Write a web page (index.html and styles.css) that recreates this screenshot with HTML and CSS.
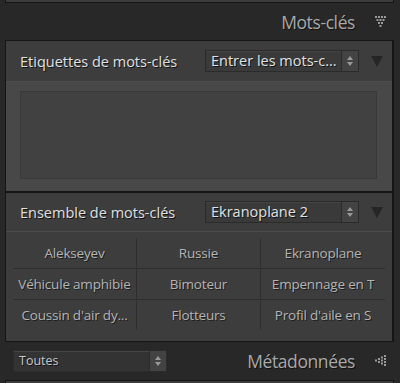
FILE: index.html
```html
<!DOCTYPE html>
<html lang="fr">
<head>
    <meta charset="UTF-8">
    <title>Mots-clés</title>
    <link rel="stylesheet" href="styles.css">
</head>
<body>
    <div class="prev-panel"></div>
    <div class="panel-title">
        <span class="title-text">Mots-clés</span>
        <svg class="dots" width="12" height="14" viewBox="0 0 12 14">
            <g fill="#9a9a9a">
                <rect x="0" y="1" width="2" height="2"/><rect x="3" y="1" width="2" height="2"/><rect x="6" y="1" width="2" height="2"/><rect x="9" y="1" width="2" height="2"/>
                <rect x="1.5" y="4" width="2" height="2"/><rect x="4.5" y="4" width="2" height="2"/><rect x="7.5" y="4" width="2" height="2"/>
                <rect x="3" y="7" width="2" height="2"/><rect x="6" y="7" width="2" height="2"/>
                <rect x="4.5" y="10" width="2" height="2"/>
            </g>
        </svg>
    </div>

    <div class="panel">
        <div class="section-head">
            <span class="label">Etiquettes de mots-clés</span>
            <div class="select">
                <span class="select-value">Entrer les mots-c...</span>
                <span class="spin"><i class="up"></i><i class="down"></i></span>
            </div>
            <span class="tri"></span>
        </div>
        <div class="tags-area">
            <div class="tags-box"></div>
        </div>

        <div class="section-head second">
            <span class="label">Ensemble de mots-clés</span>
            <div class="select">
                <span class="select-value">Ekranoplane 2</span>
                <span class="spin"><i class="up"></i><i class="down"></i></span>
            </div>
            <span class="tri"></span>
        </div>
        <div class="set-area">
            <div class="set-grid">
                <div class="kw">Alekseyev</div>
                <div class="kw">Russie</div>
                <div class="kw">Ekranoplane</div>
                <div class="kw">Véhicule amphibie</div>
                <div class="kw">Bimoteur</div>
                <div class="kw">Empennage en T</div>
                <div class="kw">Coussin d'air dy...</div>
                <div class="kw">Flotteurs</div>
                <div class="kw">Profil d'aile en S</div>
            </div>
        </div>
    </div>

    <div class="panel-title footer">
        <div class="select wide">
            <span class="select-value">Toutes</span>
            <span class="spin"><i class="up"></i><i class="down"></i></span>
        </div>
        <span class="title-text">Métadonnées</span>
        <svg class="dots" width="12" height="12" viewBox="0 0 12 12">
            <g fill="#9a9a9a">
                <rect x="9" y="0" width="2" height="2"/><rect x="9" y="3" width="2" height="2"/><rect x="9" y="6" width="2" height="2"/><rect x="9" y="9" width="2" height="2"/>
                <rect x="6" y="1.5" width="2" height="2"/><rect x="6" y="4.5" width="2" height="2"/><rect x="6" y="7.5" width="2" height="2"/>
                <rect x="3" y="3" width="2" height="2"/><rect x="3" y="6" width="2" height="2"/>
                <rect x="0" y="4.5" width="2" height="2"/>
            </g>
        </svg>
    </div>
    <div class="next-panel"></div>
</body>
</html>
```

FILE: styles.css
```css
body {
    margin: 0;
    width: 400px;
    height: 383px;
    overflow: hidden;
    background-color: #282828;
    font-family: "Open Sans", "Noto Sans", sans-serif;
}
.prev-panel {
    height: 2px;
    margin: 0 6px 0 5px;
    background-color: #3c3c3c;
    border: 1px solid #151515;
    border-top: none;
}
.panel-title {
    height: 37px;
    display: flex;
    align-items: center;
    justify-content: flex-end;
    padding-right: 13px;
}
.title-text {
    font-size: 17.5px;
    color: #a9a9a9;
    text-shadow: 1px 1px 0 #111;
    margin-right: 20px;
    letter-spacing: -0.4px;
}
.dots {
    display: block;
}
.panel {
    margin: 0 6px 0 5px;
    background-color: #3d3d3d;
    border: 1px solid #161616;
    border-right-width: 2px;
}
.section-head {
    height: 40px;
    display: flex;
    align-items: center;
    padding-left: 14px;
    border-bottom: 1px solid #4c4c4c;
}
.section-head.second {
    border-top: 2px solid #151515;
    height: 38px;
}
.label {
    font-size: 14.5px;
    color: #e0e0e0;
    text-shadow: 1px 1px 0 #141414;
    width: 185px;
}
.select {
    display: flex;
    height: 20px;
    width: 152px;
    background-color: #3a3a3a;
    border: 1px solid #2b2b2b;
    box-shadow: inset 0 1px 0 #444;
}
.select-value {
    flex: 1;
    font-size: 14.5px;
    line-height: 20px;
    padding-left: 5px;
    color: #e2e2e2;
    text-shadow: 1px 1px 0 #141414;
    white-space: nowrap;
    overflow: hidden;
}
.spin {
    width: 16px;
    border-left: 1px solid #2b2b2b;
    background-color: #434343;
    display: flex;
    flex-direction: column;
    align-items: center;
    justify-content: center;
    gap: 2px;
}
.spin i {
    width: 0;
    height: 0;
    border-left: 3px solid transparent;
    border-right: 3px solid transparent;
}
.spin .up {
    border-bottom: 4px solid #999;
}
.spin .down {
    border-top: 4px solid #999;
}
.tri {
    margin-left: 12px;
    width: 0;
    height: 0;
    border-left: 6px solid transparent;
    border-right: 6px solid transparent;
    border-top: 11px solid #262626;
}
.tags-area {
    background-color: #484848;
    padding: 9px 15px 12px 14px;
}
.tags-box {
    height: 86px;
    background-color: #414141;
    border: 1px solid #3a3a3a;
}
.set-area {
    padding: 6px 7px 11px 7px;
}
.set-grid {
    display: grid;
    grid-template-columns: repeat(3, 124px);
}
.kw {
    height: 30px;
    line-height: 30px;
    text-align: center;
    font-size: 13.5px;
    color: #b4b4b4;
    text-shadow: 1px 1px 0 #1e1e1e;
    white-space: nowrap;
    letter-spacing: -0.2px;
    border-bottom: 1px solid #2f2f2f;
    border-right: 1px solid #2f2f2f;
}
.kw:nth-child(3n) {
    border-right: none;
}
.kw:nth-child(n+7) {
    border-bottom: none;
}
.footer {
    justify-content: space-between;
    padding-left: 13px;
    height: 38px;
}
.footer .title-text {
    margin-left: auto;
    margin-right: 20px;
}
.select.wide {
    width: 152px;
    background-color: #333;
}
.select.wide .select-value {
    font-size: 12.5px;
    color: #c8c8c8;
}
.next-panel {
    height: 8px;
    margin: 0 6px 0 5px;
    background-color: #3c3c3c;
    border: 1px solid #151515;
}
```
